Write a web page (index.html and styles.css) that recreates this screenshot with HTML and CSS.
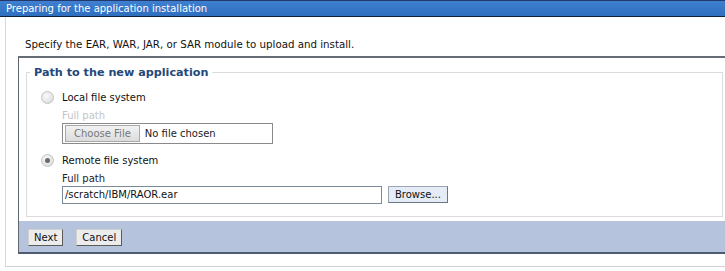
FILE: index.html
```html
<!DOCTYPE html>
<html>
<head>
<meta charset="utf-8">
<link rel="stylesheet" href="styles.css">
</head>
<body>
<div class="titlebar">Preparing for the application installation</div>
<div class="panel">
  <p class="intro">Specify the EAR, WAR, JAR, or SAR module to upload and install.</p>
  <div class="content">
    <div class="fieldset">
      <div class="legend">Path to the new application</div>
      <div class="option">
        <span class="radio"></span>
        <span class="optlabel">Local file system</span>
      </div>
      <div class="sub">
        <div class="fieldlabel disabled">Full path</div>
        <div class="filebox"><span class="choose">Choose File</span><span class="nofile">No file chosen</span></div>
      </div>
      <div class="option second">
        <span class="radio checked"></span>
        <span class="optlabel">Remote file system</span>
      </div>
      <div class="sub">
        <div class="fieldlabel">Full path</div>
        <div class="pathrow">
          <div class="textbox">/scratch/IBM/RAOR.ear</div>
          <span class="btn browse">Browse...</span>
        </div>
      </div>
    </div>
    <div class="buttonbar">
      <span class="btn">Next</span>
      <span class="btn">Cancel</span>
    </div>
  </div>
</div>
</body>
</html>
```
FILE: styles.css
```css
html, body {
  margin: 0;
  padding: 0;
  background: #ffffff;
  font-family: "DejaVu Sans", Verdana, sans-serif;
  font-size: 10px;
  color: #000;
  overflow: hidden;
}
.titlebar {
  height: 15px;
  line-height: 15px;
  padding-left: 6px;
  color: #ffffff;
  background: linear-gradient(#3f7fcf, #2f6fc0);
  border-top: 1px solid #23396b;
  border-bottom: 1px solid #0f2244;
  white-space: nowrap;
}
.panel {
  margin-left: 5px;
  height: 250px;
  border-left: 1px solid #d8d8d8;
  border-bottom: 1px solid #d0d0d0;
  box-sizing: border-box;
}
.intro {
  margin: 0;
  padding: 20px 0 0 19px;
  height: 19px;
  line-height: 14px;
  font-size: 10.25px;
  color: #111;
}
.content {
  margin-left: 12px;
  border-top: 2px solid #666c74;
  border-left: 1px solid #5f6670;
  padding-top: 14px;
}
.fieldset {
  margin-left: 7px;
  margin-right: 2px;
  border: 1px solid #dcdcdc;
  border-top: none;
  height: 145px;
  padding-top: 8px;
  box-sizing: border-box;
}
.legend {
  display: flex;
  align-items: center;
  gap: 4px;
  font-weight: bold;
  font-size: 11.2px;
  color: #25487a;
  margin-top: -16px;
  height: 16px;
}
.legend::before {
  content: "";
  width: 4px;
  border-top: 1px solid #dcdcdc;
  margin-left: -1px;
}
.legend::after {
  content: "";
  flex: 1;
  border-top: 1px solid #dcdcdc;
  margin-right: -1px;
}
.option {
  display: flex;
  align-items: center;
  gap: 8px;
  margin-left: 14px;
  margin-top: 10px;
  height: 14px;
}
.option.second {
  margin-top: 9px;
}
.radio {
  width: 11px;
  height: 11px;
  border-radius: 50%;
  border: 1px solid #c4c4c4;
  background: radial-gradient(circle at 40% 35%, #fafafa, #d6d6d6);
  display: inline-block;
  position: relative;
}
.radio.checked::after {
  content: "";
  position: absolute;
  left: 3px;
  top: 3px;
  width: 5px;
  height: 5px;
  border-radius: 50%;
  background: #6a6a6a;
}
.optlabel {
  color: #111;
}
.sub {
  margin-left: 35px;
}
.fieldlabel {
  margin-top: 6px;
  height: 12px;
  line-height: 12px;
  color: #222;
}
.fieldlabel.disabled {
  color: #c4c4c4;
}
.filebox {
  width: 207px;
  height: 19px;
  border: 1px solid #8a8a8a;
  display: flex;
  align-items: center;
  gap: 5px;
  padding-left: 2px;
  margin-top: 1px;
}
.choose {
  border: 1px solid #a8a8a8;
  background: linear-gradient(#f2f2f2, #dcdcdc);
  color: #777;
  padding: 0 8px;
  height: 15px;
  line-height: 15px;
}
.nofile {
  color: #222;
}
.pathrow {
  display: flex;
  gap: 6px;
  margin-top: 1px;
}
.textbox {
  width: 316px;
  height: 16px;
  line-height: 16px;
  border: 1px solid #7a8a99;
  padding-left: 2px;
  color: #111;
}
.btn {
  display: inline-block;
  border: 1px solid #5a5a5a;
  border-left-color: #d0d0d0;
  border-top-color: #d0d0d0;
  background: #ececec;
  padding: 0 5px;
  height: 15px;
  line-height: 15px;
  color: #111;
}
.btn.browse {
  background: #e6ecf5;
  border-color: #9aa5b5;
  border-right-color: #6a7585;
  border-bottom-color: #6a7585;
  padding: 0 6px;
}
.buttonbar {
  margin-top: 4px;
  height: 33px;
  background: #b5c4dc;
  border-bottom: 2px solid #4e5c72;
  display: flex;
  align-items: center;
  gap: 13px;
  padding-left: 9px;
  padding-top: 2px;
  box-sizing: border-box;
}
```
